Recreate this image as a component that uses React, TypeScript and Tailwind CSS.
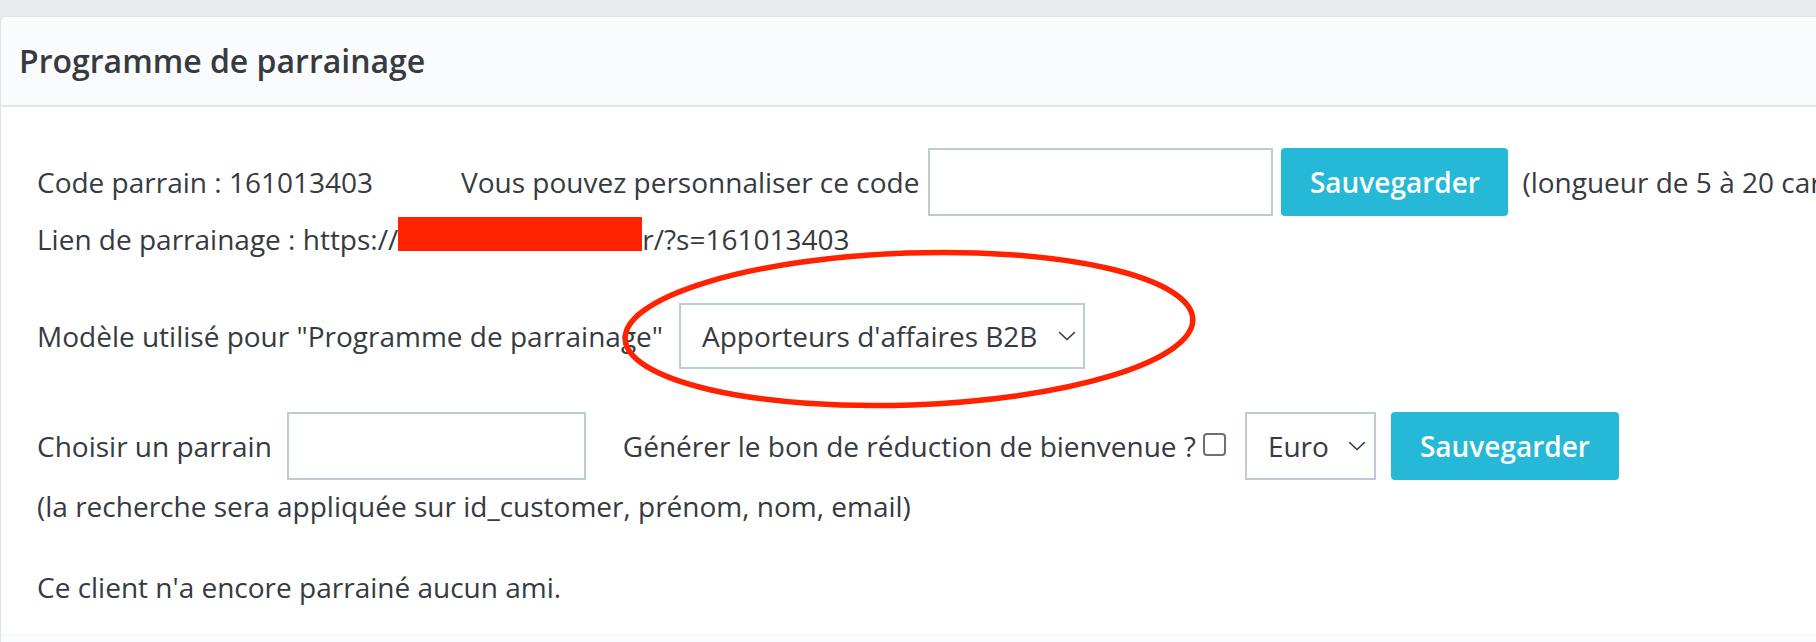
import React from "react";

function Chevron() {
  return (
    <svg width="18" height="10" viewBox="0 0 18 10" fill="none">
      <path d="M1.5 1.5 L9 8.5 L16.5 1.5" stroke="#363a41" strokeWidth="1.6" strokeLinecap="round" strokeLinejoin="round" />
    </svg>
  );
}

function FakeSelect({ label, width, height, pr }: { label: string; width: string; height: string; pr: string }) {
  return (
    <div className={`${width} ${height} ${pr} shrink-0 border-2 border-[#bbcdd2] bg-white pl-[21px] flex items-center justify-between`}>
      <span>{label}</span>
      <Chevron />
    </div>
  );
}

export default function App() {
  return (
    <div
      className="relative w-[1816px] h-[642px] overflow-hidden bg-[#e9eaeb] pt-[16px] text-[#363a41]"
      style={{ fontFamily: '"Open Sans", "Noto Sans", sans-serif' }}
    >
      <div className="bg-white rounded-tl-[6px] border-l border-t border-[#dbe6e9] h-[626px] flex flex-col">
        <div className="h-[90px] shrink-0 bg-[#fafbfc] border-b-2 border-[#dde6e9] rounded-tl-[6px] px-[18px] flex items-center">
          <h1 className="text-[32px] font-semibold leading-none">Programme de parrainage</h1>
        </div>
        <div className="flex-1 pl-[36px] pt-[41px] text-[28px] whitespace-nowrap">
          <div className="flex items-center h-[68px]">
            <span>Code parrain : 161013403</span>
            <span className="ml-[88px]">Vous pouvez personnaliser ce code</span>
            <input className="ml-[9px] w-[345px] h-[68px] shrink-0 border-2 border-[#bbcdd2] bg-white outline-none" />
            <button className="ml-[8px] w-[227px] h-[68px] shrink-0 rounded-[4px] bg-[#25b9d7] text-white font-semibold">
              Sauvegarder
            </button>
            <span className="ml-[14px]">(longueur de 5 à 20 caractères)</span>
          </div>
          <div className="mt-[1px] leading-[40px]">
            Lien de parrainage : https://
            <span className="inline-block w-[244px] h-[34px] bg-[#ff2200] align-[-1px]" />
            r/?s=161013403
          </div>
          <div className="mt-[43px] flex items-center h-[68px]">
            <span>Modèle utilisé pour "Programme de parrainage"</span>
            <div className="ml-[16px]">
              <FakeSelect label="Apporteurs d'affaires B2B" width="w-[406px]" height="h-[66px]" pr="pr-[7px]" />
            </div>
          </div>
          <div className="mt-[42px] flex items-center h-[68px]">
            <span>Choisir un parrain</span>
            <input className="ml-[15px] w-[299px] h-[68px] shrink-0 border-2 border-[#bbcdd2] bg-white outline-none" />
            <span className="ml-[37px]">Générer le bon de réduction de bienvenue ?</span>
            <span className="ml-[7px] w-[23px] h-[23px] shrink-0 rounded-[4px] border-2 border-[#707070] bg-white -mt-[4px]" />
            <div className="ml-[19px]">
              <FakeSelect label="Euro" width="w-[131px]" height="h-[68px]" pr="pr-[8px]" />
            </div>
            <button className="ml-[15px] w-[228px] h-[68px] shrink-0 rounded-[4px] bg-[#25b9d7] text-white font-semibold">
              Sauvegarder
            </button>
          </div>
          <div className="mt-[6px] leading-[40px]">
            (la recherche sera appliquée sur id_customer, prénom, nom, email)
          </div>
          <div className="mt-[41px] leading-[40px]">Ce client n'a encore parrainé aucun ami.</div>
        </div>
        <div className="h-[9px] shrink-0 bg-[#fafbfc]" />
      </div>
      <svg className="absolute left-0 top-0 pointer-events-none" width="1816" height="642" viewBox="0 0 1816 642">
        <ellipse
          cx="909"
          cy="329"
          rx="284"
          ry="76"
          transform="rotate(-2 909 329)"
          fill="none"
          stroke="#ff2200"
          strokeWidth="5.5"
        />
      </svg>
    </div>
  );
}
